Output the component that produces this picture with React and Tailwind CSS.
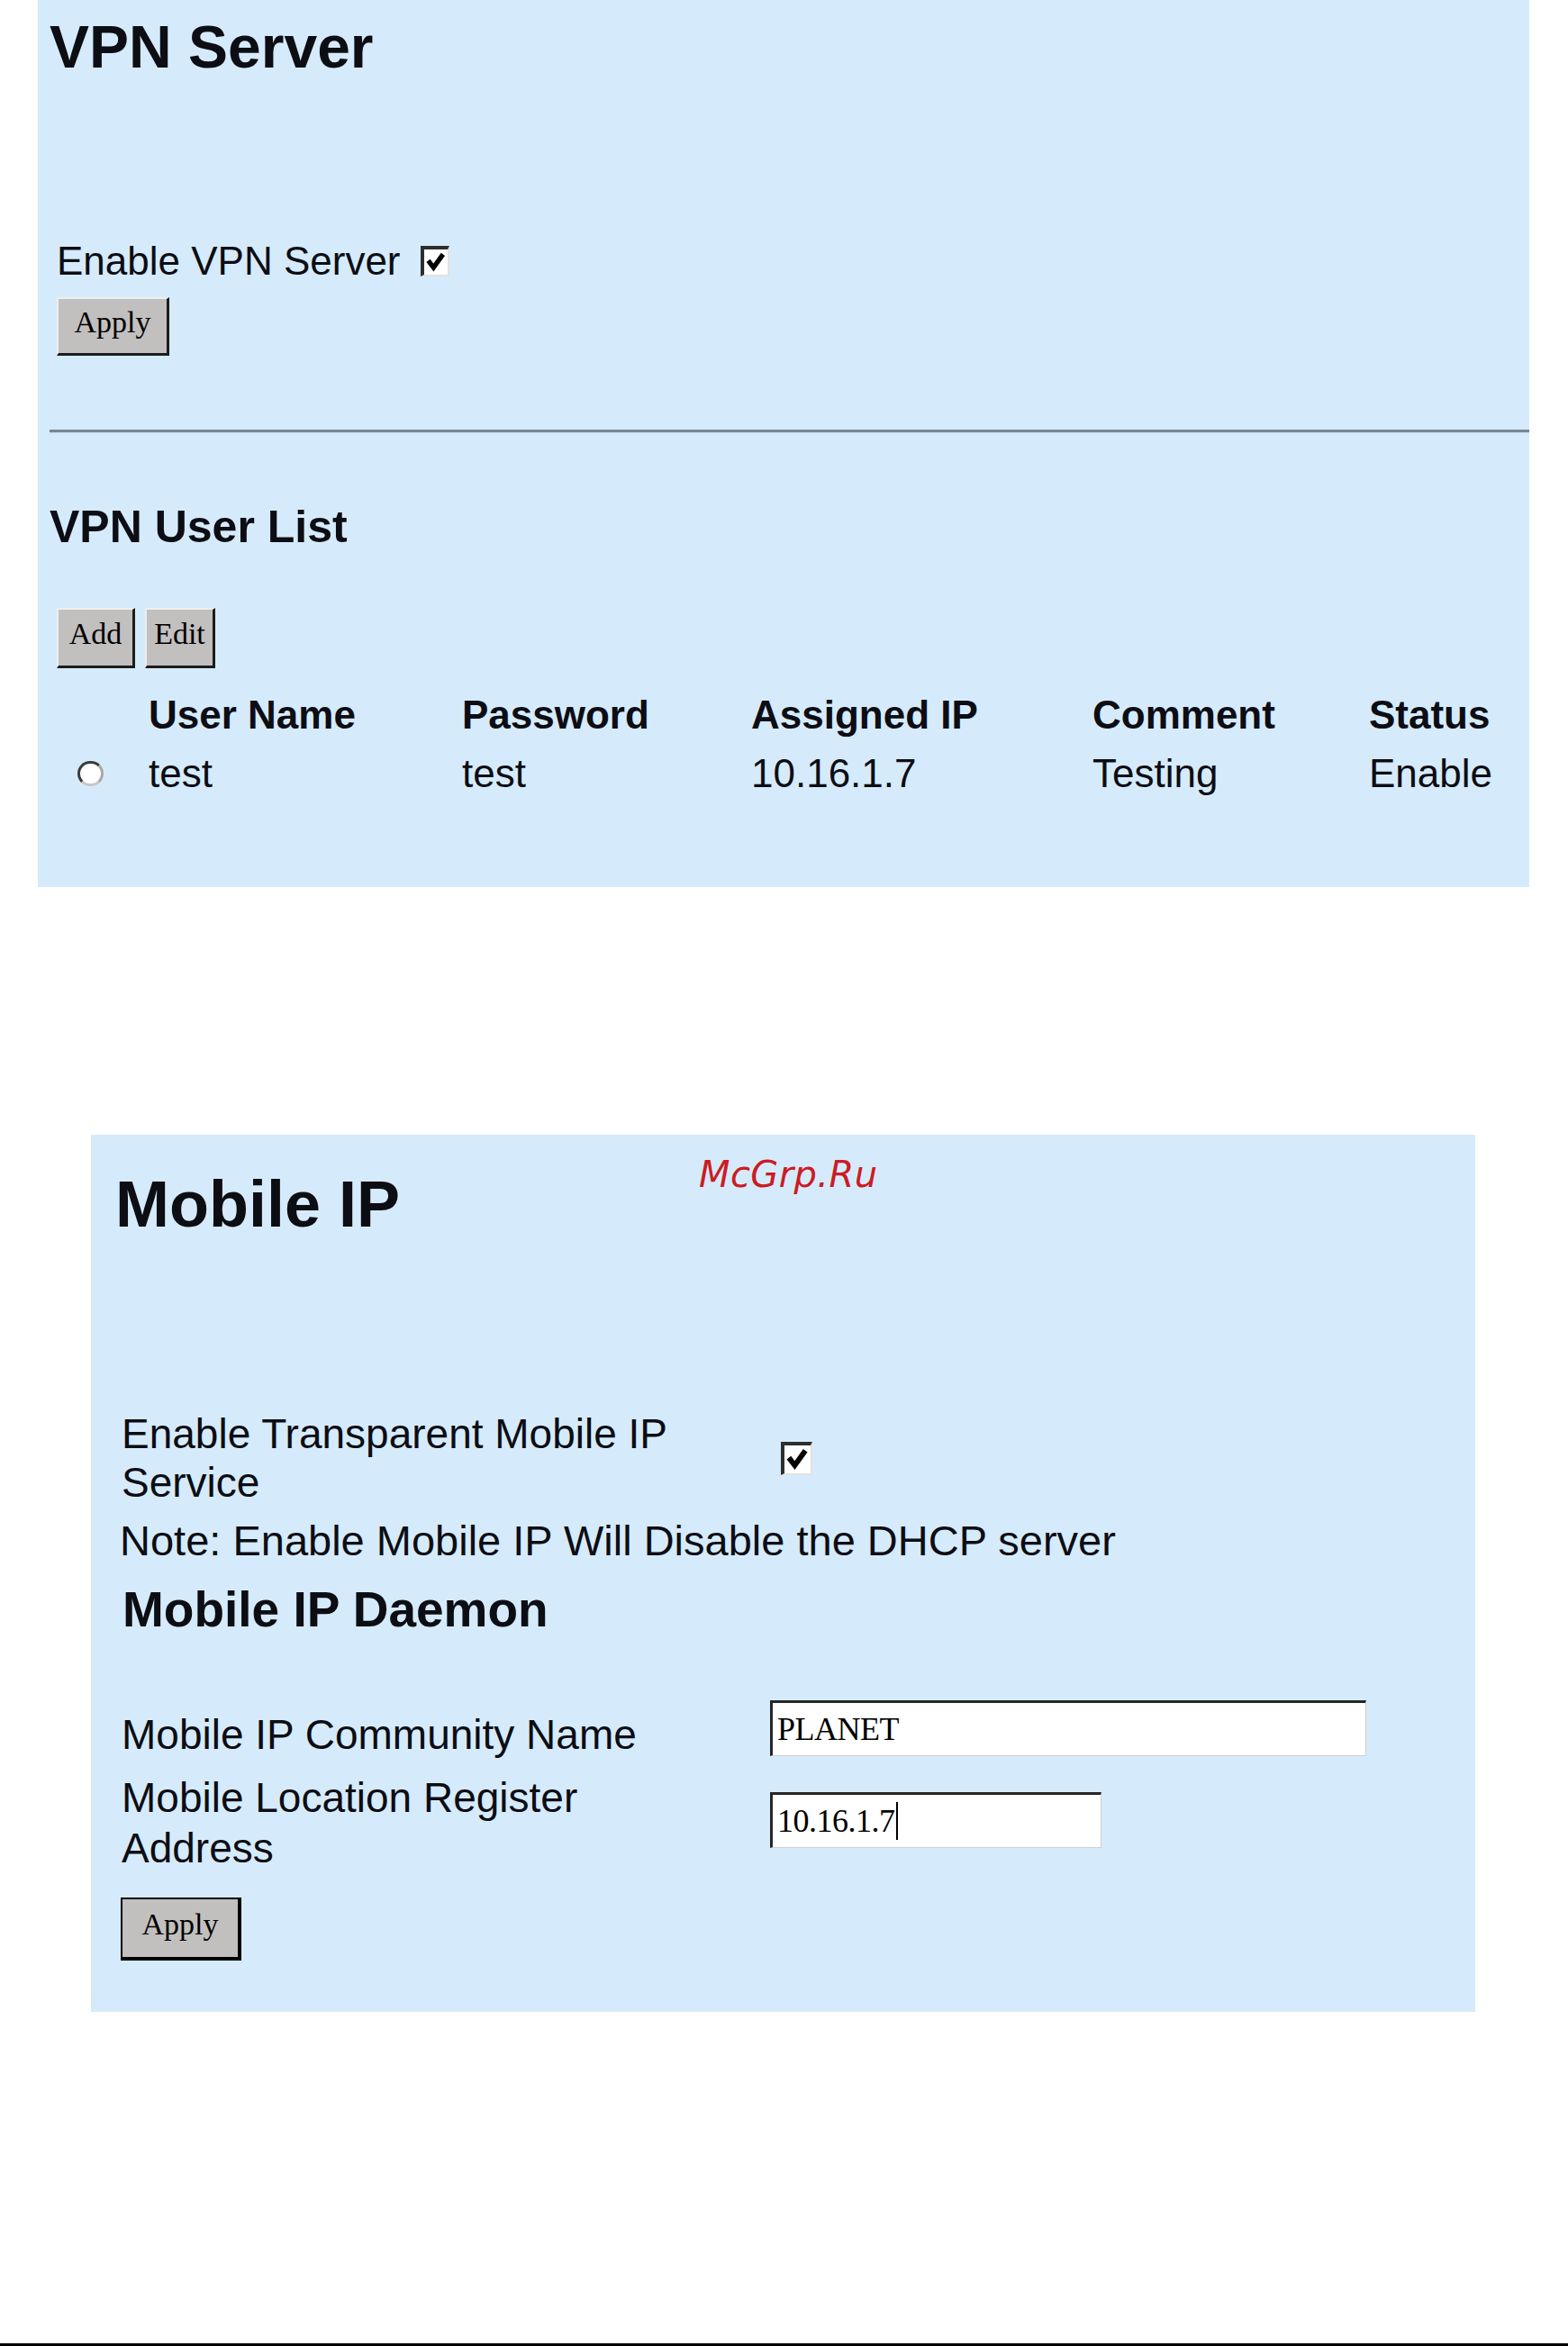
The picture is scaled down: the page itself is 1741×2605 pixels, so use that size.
import React from "react";

const sans = "font-['Liberation_Sans',Arial,sans-serif]";

const Btn = ({ children, className = "", isDefault = false }) => {
  const edge = isDefault
    ? "border-2 border-black border-r-[4px] border-b-[4px]"
    : "border-t-2 border-l-2 border-t-[#eeeeee] border-l-[#eeeeee] border-r-[3px] border-b-[3px] border-r-[#1c1c1c] border-b-[#1c1c1c]";
  return (
    <button
      type="button"
      className={`flex items-center justify-center pb-[8px] bg-[#c2bfbf] font-['Liberation_Serif','Times_New_Roman',serif] text-[34px] leading-none text-black ${edge} ${className}`}
    >
      {children}
    </button>
  );
};

const Checkbox = ({ className = "" }) => (
  <div
    className={`flex items-center justify-center bg-white border-t-[4px] border-l-[4px] border-t-[#2e2e2e] border-l-[#2e2e2e] border-r-2 border-b-2 border-r-[#e2e2e2] border-b-[#e2e2e2] ${className}`}
  >
    <svg viewBox="0 0 20 20" className="w-[90%] h-[90%]">
      <path d="M3 9 L8 15.5 L17 3" fill="none" stroke="#000" strokeWidth="4.5" strokeLinejoin="miter" />
    </svg>
  </div>
);

const Radio = () => (
  <div className="w-[29px] h-[28px] rounded-full bg-white border-[3px] border-t-[#3c3c3c] border-l-[#3c3c3c] border-r-[#a8a8a8] border-b-[#c8c8c8]" />
);

const Field = ({ value, caret = false, className = "" }) => (
  <div
    className={`flex items-center pl-[5px] bg-white border-t-[3px] border-l-[3px] border-t-[#262626] border-l-[#262626] border-r border-b border-r-[#cfcfcf] border-b-[#cfcfcf] font-['Liberation_Serif','Times_New_Roman',serif] text-[36px] leading-[40px] text-black tracking-[-0.5px] ${className}`}
  >
    <span>{value}</span>
    {caret && <span className="ml-[1px] inline-block w-[2px] h-[42px] bg-black" />}
  </div>
);

export default function App() {
  return (
    <div className={`relative flex flex-col w-[1741px] h-[2605px] bg-white text-[#0d0d14] ${sans}`}>
      {/* VPN Server panel */}
      <section className="ml-[42px] w-[1656px] bg-[#d5ebfb] pt-[19px] pb-[91px]">
        <h1 className="ml-[13px] text-[66px] leading-[66px] font-bold">VPN Server</h1>

        <div className="mt-[183px] ml-[21px] flex h-[44px] items-center">
          <span className="text-[44px] leading-[44px]">Enable VPN Server</span>
          <Checkbox className="ml-[22px] w-[32px] h-[34px]" />
        </div>

        <Btn className="mt-[18px] ml-[21px] w-[125px] h-[65px]">Apply</Btn>

        <div className="mt-[82px] ml-[13px] h-[4px] border-t-[3px] border-b border-t-[#7a8792] border-b-[#c6d9e6]" />

        <h2 className="mt-[79px] ml-[13px] text-[50px] leading-[50px] font-bold">VPN User List</h2>

        <div className="mt-[65px] ml-[21px] flex gap-[11px]">
          <Btn className="w-[87px] h-[67px]">Add</Btn>
          <Btn className="w-[78px] h-[67px]">Edit</Btn>
        </div>

        <div className="mt-[22px] ml-[44px] grid grid-cols-[79px_348px_321px_379px_307px_1fr] grid-rows-[60px_70px] items-center text-[44px] leading-[60px]">
          <div />
          <div className="font-bold">User Name</div>
          <div className="font-bold">Password</div>
          <div className="font-bold">Assigned IP</div>
          <div className="font-bold">Comment</div>
          <div className="font-bold">Status</div>

          <div className="flex items-center">
            <Radio />
          </div>
          <div>test</div>
          <div>test</div>
          <div>10.16.1.7</div>
          <div>Testing</div>
          <div>Enable</div>
        </div>
      </section>

      {/* Mobile IP panel */}
      <section className="relative mt-[275px] ml-[101px] w-[1537px] bg-[#d5ebfb] pt-[41px] pb-[57px]">
        <span className="absolute left-[675px] top-[24px] font-['DejaVu_Sans',Verdana,sans-serif] italic text-[40px] leading-[40px] tracking-[0.4px] text-[#cc1b24]">
          McGrp.Ru
        </span>

        <h1 className="ml-[27px] text-[72px] leading-[72px] font-bold">Mobile IP</h1>

        <div className="mt-[192px] ml-[34px] grid grid-cols-[650px_1fr] gap-x-[70px] items-center">
          <div className="text-[46px] leading-[54px]">Enable Transparent Mobile IP Service</div>
          <Checkbox className="ml-[12px] w-[35px] h-[37px]" />
        </div>

        <p className="mt-[11px] ml-[32px] text-[47px] leading-[54px]">
          Note: Enable Mobile IP Will Disable the DHCP server
        </p>

        <h2 className="mt-[22px] ml-[35px] text-[55px] leading-[54px] font-bold">Mobile IP Daemon</h2>

        <div className="mt-[74px] ml-[34px] grid grid-cols-[650px_1fr] gap-x-[70px] items-start">
          <div className="pt-[11px] text-[46px] leading-[54px]">Mobile IP Community Name</div>
          <Field value="PLANET" className="w-[662px] h-[62px]" />
        </div>

        <div className="mt-[15px] ml-[34px] grid grid-cols-[650px_1fr] gap-x-[70px] items-start">
          <div className="text-[46px] leading-[56px]">Mobile Location Register Address</div>
          <Field value="10.16.1.7" caret className="mt-[22px] w-[368px] h-[62px]" />
        </div>

        <Btn isDefault className="mt-[27px] ml-[33px] w-[134px] h-[70px]">
          Apply
        </Btn>
      </section>

      <div className="flex-1" />
      <div className="h-[3px] w-full bg-black" />
    </div>
  );
}
